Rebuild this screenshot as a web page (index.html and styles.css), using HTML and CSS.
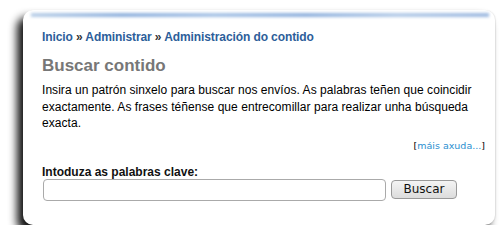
FILE: index.html
```html
<!DOCTYPE html>
<html>
<head>
<meta charset="utf-8">
<link rel="stylesheet" href="styles.css">
</head>
<body>
<div class="card">
  <div class="strip"></div>
  <div class="content">
    <div class="crumbs"><a href="#">Inicio</a> » <a href="#">Administrar</a> » <a href="#">Administración do contido</a></div>
    <h2 class="title">Buscar contido</h2>
    <p class="intro">Insira un patrón sinxelo para buscar nos envíos. As palabras teñen que coincidir exactamente. As frases téñense que entrecomillar para realizar unha búsqueda exacta.</p>
    <div class="more">[<a href="#">máis axuda...</a>]</div>
    <form class="search">
      <label class="label">Intoduza as palabras clave:</label>
      <div class="row">
        <input class="field" type="text">
        <button class="btn" type="button">Buscar</button>
      </div>
    </form>
  </div>
</div>
</body>
</html>
```
FILE: styles.css
```css
html, body {
  margin: 0;
  padding: 0;
  background: #fff;
}
body {
  padding: 10px 8px 0 23px;
  font-family: "Liberation Sans", Arial, sans-serif;
}
.card {
  width: 472px;
  height: 215px;
  background: #fff;
  border-radius: 10px;
  box-shadow: -6px 7px 8px rgba(0,0,0,0.92), 1px 0 1px rgba(0,0,0,0.08);
  box-sizing: border-box;
  overflow: hidden;
  position: relative;
}
.strip {
  height: 4px;
  margin: 3px 6px 0 8px;
  background: linear-gradient(90deg, #b9cfe8, #8fb1dd 20%, #a7c3e6 40%, #8fb1dd 60%, #b4cbe8 80%, #9db9e0);
  filter: blur(1.5px);
}
.content {
  padding: 12px 10px 0 19px;
}
.crumbs {
  font-size: 12px;
  font-weight: bold;
  color: #333;
  line-height: 16px;
  letter-spacing: -0.1px;
}
.crumbs a {
  color: #2d5e9a;
  text-decoration: none;
}
.title {
  margin: 11px 0 0 0;
  font-size: 17px;
  line-height: 20px;
  color: #777;
  font-weight: bold;
}
.intro {
  margin: 6px 0 0 0;
  font-size: 12px;
  line-height: 16.5px;
  letter-spacing: 0.05px;
  color: #000;
}
.more {
  margin-top: 7px;
  padding-right: 0;
  text-align: right;
  font-family: "DejaVu Sans", sans-serif;
  font-size: 9.5px;
  line-height: 14px;
  color: #000;
}
.more a {
  color: #2b8fd0;
  text-decoration: none;
}
.search {
  margin: 12px 0 0 0;
}
.label {
  display: block;
  font-size: 12px;
  font-weight: bold;
  line-height: 14px;
  color: #111;
}
.row {
  display: flex;
  align-items: center;
  gap: 5px;
  margin-top: 0;
}
.field {
  box-sizing: border-box;
  width: 343px;
  height: 22px;
  margin: 0 0 0 1px;
  border: 1px solid #aaa;
  border-radius: 4px;
  background: #fff;
}
.btn {
  box-sizing: border-box;
  width: 66px;
  height: 19px;
  padding: 0;
  border: 1px solid #999;
  border-radius: 4px;
  background: linear-gradient(#f4f4f4, #dcdcdc);
  font-family: "DejaVu Sans", sans-serif;
  font-size: 12px;
  line-height: 17px;
  color: #111;
}
```
